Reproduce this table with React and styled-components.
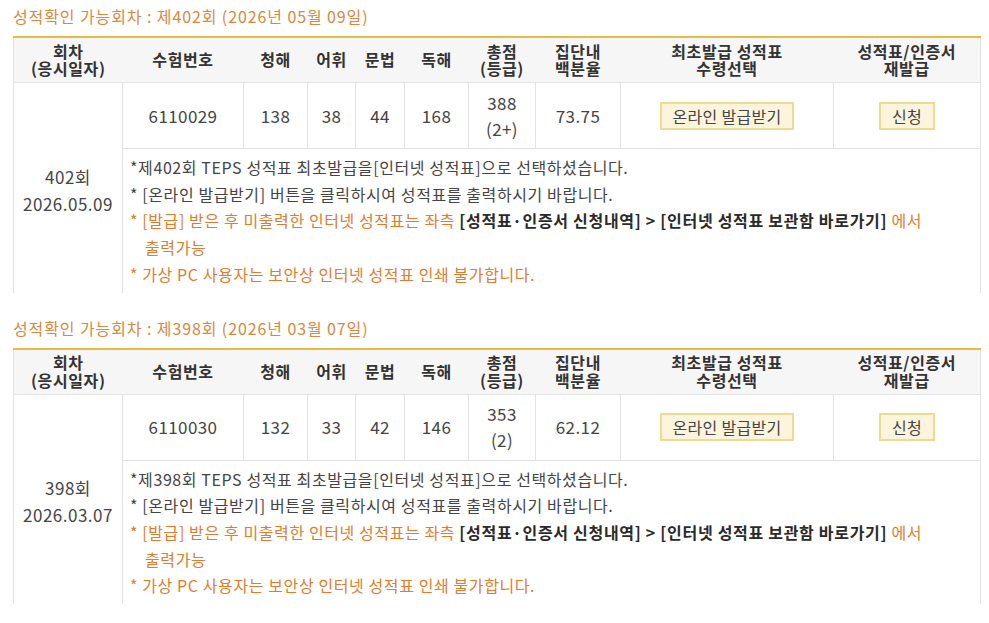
import React from "react";
import styled, { createGlobalStyle } from "styled-components";

const Global = createGlobalStyle`
  html, body { margin: 0; padding: 0; background: #fff; }
  body { font-family: "Noto Sans CJK KR", "Noto Sans", sans-serif; color: #444; }
`;

const Page = styled.div`
  padding: 5px 9px 0 13px;
  width: 967px;
`;

const Section = styled.section`
  & + & { margin-top: 24px; }
`;

const Title = styled.h2`
  margin: 0 0 9px;
  font-size: 16px;
  line-height: 22px;
  font-weight: 400;
  color: #d9883e;
  letter-spacing: 0.9px;
`;

const Table = styled.table`
  width: 967px;
  table-layout: fixed;
  border-collapse: collapse;
  border-top: 2px solid #e8bb45;
  border-left: 1px solid #e3e3e3;
  border-right: 1px solid #e3e3e3;
`;

const Th = styled.th`
  background: #f6f6f6;
  color: #333;
  font-size: 16px;
  font-weight: 700;
  line-height: 17.5px;
  height: 44px;
  padding: 0;
  text-align: center;
  border-bottom: 1px solid #e3e3e3;
  letter-spacing: 0.6px;
  white-space: nowrap;
`;

const Td = styled.td`
  font-size: 17px;
  line-height: 26px;
  color: #444;
  text-align: center;
  padding: 0;
  height: 65px;
  border: 1px solid #e3e3e3;
  border-top: none;
  letter-spacing: 0.4px;
`;

const RoundCell = styled.td`
  font-size: 17px;
  line-height: 27px;
  color: #444;
  text-align: center;
  vertical-align: middle;
  padding: 4px 0 0;
  border-right: 1px solid #e3e3e3;
  letter-spacing: 0.5px;
`;

const NotesCell = styled.td`
  padding: 5px 6px 5px 7px;
  font-size: 16px;
  line-height: 26.7px;
  vertical-align: top;
  letter-spacing: 0.6px;
  white-space: nowrap;
`;

const Note = styled.div`
  color: ${(p) => (p.$accent ? "#e27c2c" : "#444")};
  padding-left: ${(p) => (p.$hang ? "15px" : "0")};
  text-indent: ${(p) => (p.$hang ? "-15px" : "0")};
`;

const Strong = styled.b`
  color: #2a2a2a;
  font-weight: 700;
  letter-spacing: 0.7px;
`;

const IssueButton = styled.button`
  font-family: inherit;
  font-size: 16px;
  line-height: 22px;
  color: #444;
  background: #fcf4dd;
  border: 2px solid #eedc8e;
  padding: 1px ${(p) => (p.$narrow ? "11px" : "10px")};
  cursor: pointer;
  letter-spacing: 0.3px;
  white-space: nowrap;
`;

const cols = [109, 121, 64, 48, 49, 64, 67, 85, 213, 147];

const data = [
  {
    round: "402",
    titleDate: "2026년 05월 09일",
    date: "2026.05.09",
    no: "6110029",
    l: 138, v: 38, g: 44, r: 168,
    total: "388", grade: "(2+)",
    pct: "73.75",
  },
  {
    round: "398",
    titleDate: "2026년 03월 07일",
    date: "2026.03.07",
    no: "6110030",
    l: 132, v: 33, g: 42, r: 146,
    total: "353", grade: "(2)",
    pct: "62.12",
  },
];

function ScoreTable({ d }) {
  return (
    <Section>
      <Title>
        성적확인 가능회차 : 제{d.round}회 ({d.titleDate})
      </Title>
      <Table>
        <colgroup>
          {cols.map((w, i) => (
            <col key={i} style={{ width: w }} />
          ))}
        </colgroup>
        <thead>
          <tr>
            <Th>회차<br />(응시일자)</Th>
            <Th>수험번호</Th>
            <Th>청해</Th>
            <Th>어휘</Th>
            <Th>문법</Th>
            <Th>독해</Th>
            <Th>총점<br />(등급)</Th>
            <Th>집단내<br />백분율</Th>
            <Th>최초발급 성적표<br />수령선택</Th>
            <Th>성적표/인증서<br />재발급</Th>
          </tr>
        </thead>
        <tbody>
          <tr>
            <RoundCell rowSpan={2}>
              {d.round}회<br />{d.date}
            </RoundCell>
            <Td>{d.no}</Td>
            <Td>{d.l}</Td>
            <Td>{d.v}</Td>
            <Td>{d.g}</Td>
            <Td>{d.r}</Td>
            <Td>{d.total}<br />{d.grade}</Td>
            <Td>{d.pct}</Td>
            <Td><IssueButton>온라인 발급받기</IssueButton></Td>
            <Td><IssueButton $narrow>신청</IssueButton></Td>
          </tr>
          <tr>
            <NotesCell colSpan={9}>
              <Note>*제{d.round}회 TEPS 성적표 최초발급을[인터넷 성적표]으로 선택하셨습니다.</Note>
              <Note>* [온라인 발급받기] 버튼을 클릭하시여 성적표를 출력하시기 바랍니다.</Note>
              <Note $accent $hang>
                * [발급] 받은 후 미출력한 인터넷 성적표는 좌측{" "}
                <Strong>[성적표·인증서 신청내역] &gt; [인터넷 성적표 보관함 바로가기]</Strong> 에서
                <br />출력가능
              </Note>
              <Note $accent>* 가상 PC 사용자는 보안상 인터넷 성적표 인쇄 불가합니다.</Note>
            </NotesCell>
          </tr>
        </tbody>
      </Table>
    </Section>
  );
}

export default function App() {
  return (
    <>
      <Global />
      <Page>
        {data.map((d) => (
          <ScoreTable key={d.round} d={d} />
        ))}
      </Page>
    </>
  );
}
